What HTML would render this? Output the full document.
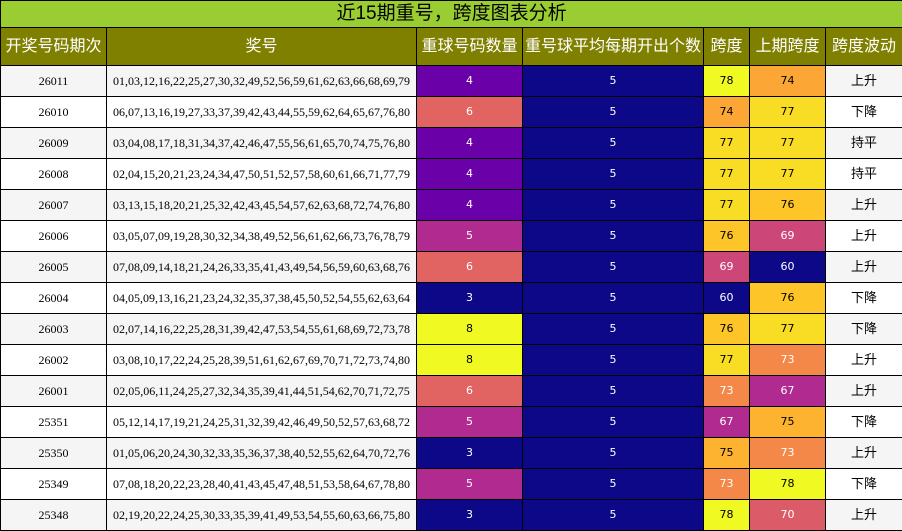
<!DOCTYPE html>
<html><head><meta charset="utf-8"><style>
html,body{margin:0;padding:0;background:#fff;width:902px;height:531px;overflow:hidden}
table{border-collapse:collapse;table-layout:fixed;width:902px;font-family:"Liberation Serif","Noto Sans CJK SC",serif;font-size:12px}
td,th{border:1px solid #000;text-align:center;padding:0;overflow:hidden;white-space:nowrap;line-height:14px}
.t{background:#9acd32;height:26px;font-family:"Liberation Sans","Noto Sans CJK SC",sans-serif;font-size:19px;font-weight:normal;color:#000;line-height:22px}
.h th{background:#808000;color:#fff;height:37px;font-family:"Liberation Sans","Noto Sans CJK SC",sans-serif;font-size:16px;font-weight:normal;line-height:20px}
tr.r td{height:30px}
tr.r:nth-child(odd) td{background:#f5f5f5}
tr.r:nth-child(even) td{background:#fff}
td.c{font-family:"DejaVu Sans","Noto Sans CJK SC",sans-serif;font-size:11px}
td.z{font-family:"Liberation Sans","Noto Sans CJK SC",sans-serif;font-size:13px;line-height:14px}
.w{color:#fff}
</style></head><body>
<table>
<colgroup><col style="width:106px"><col style="width:310px"><col style="width:106px"><col style="width:181px"><col style="width:46px"><col style="width:76px"><col style="width:77px"></colgroup>
<tr><th class="t" colspan="7">近15期重号，跨度图表分析</th></tr>
<tr class="h"><th>开奖号码期次</th><th>奖号</th><th>重球号码数量</th><th>重号球平均每期开出个数</th><th>跨度</th><th>上期跨度</th><th>跨度波动</th></tr>
<tbody id="b">
<tr class="r"><td>26011</td><td>01,03,12,16,22,25,27,30,32,49,52,56,59,61,62,63,66,68,69,79</td><td class="c w" style="background:#6a00a8!important">4</td><td class="c w" style="background:#0d0887!important">5</td><td class="c" style="background:#f0f921!important">78</td><td class="c" style="background:#fca636!important">74</td><td class="z">上升</td></tr>
<tr class="r"><td>26010</td><td>06,07,13,16,19,27,33,37,39,42,43,44,55,59,62,64,65,67,76,80</td><td class="c w" style="background:#e16462!important">6</td><td class="c w" style="background:#0d0887!important">5</td><td class="c" style="background:#fca636!important">74</td><td class="c" style="background:#f9dc24!important">77</td><td class="z">下降</td></tr>
<tr class="r"><td>26009</td><td>03,04,08,17,18,31,34,37,42,46,47,55,56,61,65,70,74,75,76,80</td><td class="c w" style="background:#6a00a8!important">4</td><td class="c w" style="background:#0d0887!important">5</td><td class="c" style="background:#f9dc24!important">77</td><td class="c" style="background:#f9dc24!important">77</td><td class="z">持平</td></tr>
<tr class="r"><td>26008</td><td>02,04,15,20,21,23,24,34,47,50,51,52,57,58,60,61,66,71,77,79</td><td class="c w" style="background:#6a00a8!important">4</td><td class="c w" style="background:#0d0887!important">5</td><td class="c" style="background:#f9dc24!important">77</td><td class="c" style="background:#f9dc24!important">77</td><td class="z">持平</td></tr>
<tr class="r"><td>26007</td><td>03,13,15,18,20,21,25,32,42,43,45,54,57,62,63,68,72,74,76,80</td><td class="c w" style="background:#6a00a8!important">4</td><td class="c w" style="background:#0d0887!important">5</td><td class="c" style="background:#f9dc24!important">77</td><td class="c" style="background:#fdc527!important">76</td><td class="z">上升</td></tr>
<tr class="r"><td>26006</td><td>03,05,07,09,19,28,30,32,34,38,49,52,56,61,62,66,73,76,78,79</td><td class="c w" style="background:#b12a90!important">5</td><td class="c w" style="background:#0d0887!important">5</td><td class="c" style="background:#fdc527!important">76</td><td class="c w" style="background:#cc4778!important">69</td><td class="z">上升</td></tr>
<tr class="r"><td>26005</td><td>07,08,09,14,18,21,24,26,33,35,41,43,49,54,56,59,60,63,68,76</td><td class="c w" style="background:#e16462!important">6</td><td class="c w" style="background:#0d0887!important">5</td><td class="c w" style="background:#cc4778!important">69</td><td class="c w" style="background:#0d0887!important">60</td><td class="z">上升</td></tr>
<tr class="r"><td>26004</td><td>04,05,09,13,16,21,23,24,32,35,37,38,45,50,52,54,55,62,63,64</td><td class="c w" style="background:#0d0887!important">3</td><td class="c w" style="background:#0d0887!important">5</td><td class="c w" style="background:#0d0887!important">60</td><td class="c" style="background:#fdc527!important">76</td><td class="z">下降</td></tr>
<tr class="r"><td>26003</td><td>02,07,14,16,22,25,28,31,39,42,47,53,54,55,61,68,69,72,73,78</td><td class="c" style="background:#f0f921!important">8</td><td class="c w" style="background:#0d0887!important">5</td><td class="c" style="background:#fdc527!important">76</td><td class="c" style="background:#f9dc24!important">77</td><td class="z">下降</td></tr>
<tr class="r"><td>26002</td><td>03,08,10,17,22,24,25,28,39,51,61,62,67,69,70,71,72,73,74,80</td><td class="c" style="background:#f0f921!important">8</td><td class="c w" style="background:#0d0887!important">5</td><td class="c" style="background:#f9dc24!important">77</td><td class="c w" style="background:#f48849!important">73</td><td class="z">上升</td></tr>
<tr class="r"><td>26001</td><td>02,05,06,11,24,25,27,32,34,35,39,41,44,51,54,62,70,71,72,75</td><td class="c w" style="background:#e16462!important">6</td><td class="c w" style="background:#0d0887!important">5</td><td class="c w" style="background:#f48849!important">73</td><td class="c w" style="background:#b02a8f!important">67</td><td class="z">上升</td></tr>
<tr class="r"><td>25351</td><td>05,12,14,17,19,21,24,25,31,32,39,42,46,49,50,52,57,63,68,72</td><td class="c w" style="background:#b12a90!important">5</td><td class="c w" style="background:#0d0887!important">5</td><td class="c w" style="background:#b02a8f!important">67</td><td class="c" style="background:#fdb32f!important">75</td><td class="z">下降</td></tr>
<tr class="r"><td>25350</td><td>01,05,06,20,24,30,32,33,35,36,37,38,40,52,55,62,64,70,72,76</td><td class="c w" style="background:#0d0887!important">3</td><td class="c w" style="background:#0d0887!important">5</td><td class="c" style="background:#fdb32f!important">75</td><td class="c w" style="background:#f48849!important">73</td><td class="z">上升</td></tr>
<tr class="r"><td>25349</td><td>07,08,18,20,22,23,28,40,41,43,45,47,48,51,53,58,64,67,78,80</td><td class="c w" style="background:#b12a90!important">5</td><td class="c w" style="background:#0d0887!important">5</td><td class="c w" style="background:#f48849!important">73</td><td class="c" style="background:#f0f921!important">78</td><td class="z">下降</td></tr>
<tr class="r"><td>25348</td><td>02,19,20,22,24,25,30,33,35,39,41,49,53,54,55,60,63,66,75,80</td><td class="c w" style="background:#0d0887!important">3</td><td class="c w" style="background:#0d0887!important">5</td><td class="c" style="background:#f0f921!important">78</td><td class="c w" style="background:#db5c68!important">70</td><td class="z">上升</td></tr>
</tbody></table>
</body></html>
